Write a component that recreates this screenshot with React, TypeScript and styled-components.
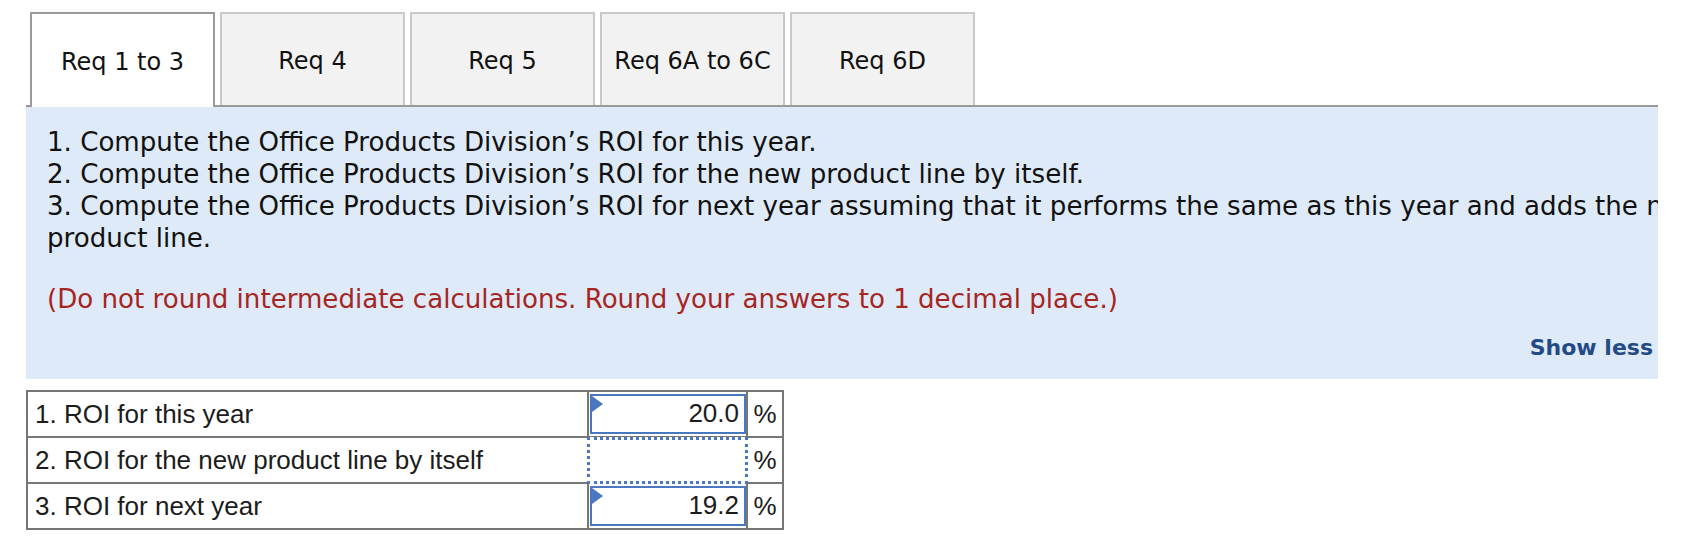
import React from "react";
import styled, { createGlobalStyle } from "styled-components";

const GlobalStyle = createGlobalStyle`
  html, body {
    margin: 0;
    padding: 0;
    background: #ffffff;
  }
  body {
    font-family: "DejaVu Sans", Verdana, sans-serif;
    color: #111111;
  }
`;

const Page = styled.div`
  padding: 12px 0 0 26px;
  width: 1632px;
`;

const TabStrip = styled.div`
  display: flex;
  gap: 5px;
  height: 93px;
  padding-left: 4px;
  border-bottom: 2px solid #9a9a9a;
`;

const Tab = styled.div<{ $active?: boolean }>`
  box-sizing: border-box;
  width: 185px;
  display: flex;
  align-items: center;
  justify-content: center;
  padding-top: 3px;
  font-size: 24px;
  color: #111;
  background: ${(p) => (p.$active ? "#ffffff" : "#f2f2f2")};
  border: 2px solid ${(p) => (p.$active ? "#9a9a9a" : "#c9c9c9")};
  border-bottom: none;
  margin-bottom: ${(p) => (p.$active ? "-2px" : "0")};
  position: relative;
  z-index: ${(p) => (p.$active ? 1 : 0)};
  cursor: pointer;
`;

const Panel = styled.div`
  background: #deeaf8;
  overflow: hidden;
  padding: 19px 5px 18px 21px;
`;

const Instructions = styled.div`
  width: 1700px;
  font-size: 26.1px;
  line-height: 32px;
  color: #111;
`;

const Item = styled.div``;

const Note = styled.div`
  margin-top: 29px;
  color: #a6261f;
`;

const ShowLessRow = styled.div`
  display: flex;
  justify-content: flex-end;
  margin-top: 20px;
`;

const ShowLess = styled.span`
  font-size: 22px;
  line-height: 26px;
  font-weight: bold;
  color: #234a85;
  cursor: pointer;
`;

const AnswerTable = styled.table`
  border-collapse: collapse;
  table-layout: fixed;
  margin-top: 11px;
  font-family: "Liberation Sans", Arial, Helvetica, sans-serif;
  font-size: 26px;
  color: #1c1c1c;
`;

const Row = styled.tr`
  height: 46px;
`;

const LabelCell = styled.td`
  width: 552px;
  border: 2px solid #767676;
  padding: 0 0 0 7px;
  vertical-align: middle;
`;

const InputCell = styled.td`
  width: 156px;
  border: 2px solid #767676;
  padding: 1px 0 2px 1px;
  vertical-align: middle;
`;

const UnitCell = styled.td`
  width: 34px;
  border: 2px solid #767676;
  padding: 0;
  text-align: center;
  vertical-align: middle;
`;

const AnswerBox = styled.div<{ $empty?: boolean }>`
  position: relative;
  box-sizing: border-box;
  height: ${(p) => (p.$empty ? "47px" : "40px")};
  margin: ${(p) => (p.$empty ? "-3px -2px -4px -3px" : "0")};
  border: ${(p) => (p.$empty ? "3px dotted #4a78bf" : "2px solid #4a78bf")};
  display: flex;
  align-items: center;
  justify-content: flex-end;
  padding-right: 5px;
  background: #fff;

  ${(p) =>
    p.$empty
      ? ""
      : `&::before {
    content: "";
    position: absolute;
    left: 0;
    top: 0;
    width: 0;
    height: 0;
    border-left: 11px solid #4a78bf;
    border-top: 8px solid transparent;
    border-bottom: 8px solid transparent;
  }`}
`;

const tabs = ["Req 1 to 3", "Req 4", "Req 5", "Req 6A to 6C", "Req 6D"];

const rows = [
  { label: "1. ROI for this year", value: "20.0" },
  { label: "2. ROI for the new product line by itself", value: "" },
  { label: "3. ROI for next year", value: "19.2" },
];

export default function App() {
  return (
    <>
      <GlobalStyle />
      <Page>
        <TabStrip>
          {tabs.map((t, i) => (
            <Tab key={t} $active={i === 0}>
              {t}
            </Tab>
          ))}
        </TabStrip>
        <Panel>
          <Instructions>
            <Item>1. Compute the Office Products Division’s ROI for this year.</Item>
            <Item>
              2. Compute the Office Products Division’s ROI for the new product line by itself.
            </Item>
            <Item>
              3. Compute the Office Products Division’s ROI for next year assuming that it performs
              the same as this year and adds the new product line.
            </Item>
            <Note>
              (Do not round intermediate calculations. Round your answers to 1 decimal place.)
            </Note>
          </Instructions>
          <ShowLessRow>
            <ShowLess>Show less</ShowLess>
          </ShowLessRow>
        </Panel>
        <AnswerTable>
          <tbody>
            {rows.map((r) => (
              <Row key={r.label}>
                <LabelCell>{r.label}</LabelCell>
                <InputCell>
                  <AnswerBox $empty={r.value === ""}>{r.value}</AnswerBox>
                </InputCell>
                <UnitCell>%</UnitCell>
              </Row>
            ))}
          </tbody>
        </AnswerTable>
      </Page>
    </>
  );
}
